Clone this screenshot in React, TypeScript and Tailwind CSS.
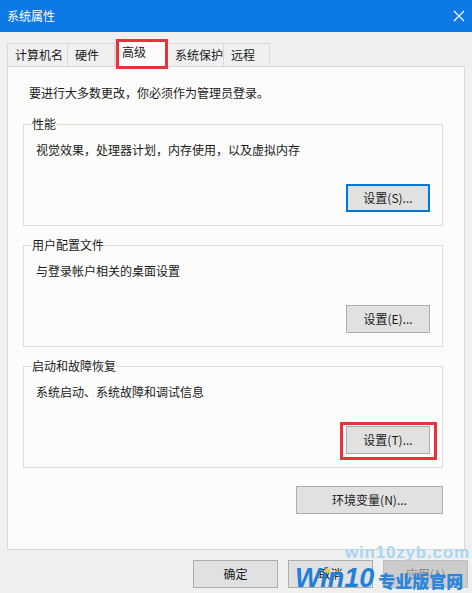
import React from "react";

const font = { fontFamily: '"Noto Sans CJK SC", "Microsoft YaHei", sans-serif' };

function Btn({ label, focus, disabled, w = "w-[84px]" }: { label: string; focus?: boolean; disabled?: boolean; w?: string }) {
  const base = "h-[28px] flex items-center justify-center text-[12px] leading-[16px] " + w;
  if (focus)
    return <div className={base + " bg-[#e1e1e1] border-2 border-[#0078d7] text-[#1a1a1a]"}>{label}</div>;
  if (disabled)
    return <div className={base + " bg-[#cccccc] border border-[#bfbfbf] text-[#8a8a8a]"}>{label}</div>;
  return <div className={base + " bg-[#e1e1e1] border border-[#adadad] text-[#1a1a1a]"}>{label}</div>;
}

function Group({ title, desc, button, focus, marked }: { title: string; desc: string; button: string; focus?: boolean; marked?: boolean }) {
  return (
    <div className="relative border border-[#dcdcdc] h-[102px] pt-[17px] pl-[12px] pr-[12px]">
      <div className="absolute -top-[9px] left-[7px] bg-[#fcfcfa] px-[1px] text-[12px] leading-[16px] text-[#1a1a1a]">{title}</div>
      <div className="text-[12px] leading-[16px] text-[#1a1a1a]">{desc}</div>
      <div className="flex justify-end mt-[26px]">
        <div className="relative">
          <Btn label={button} focus={focus} />
          {marked && <div className="absolute -left-[6px] -top-[4px] w-[97px] h-[38px] border-[3px] border-[#e8333c]" />}
        </div>
      </div>
    </div>
  );
}

function TitleBar() {
  return (
    <div className="flex h-[32px] shrink-0 items-center justify-between bg-[#0c79e6] pl-[7px] pr-[6px] text-white">
      <span className="text-[12px] leading-[16px] text-white">系统属性</span>
      <svg width="12" height="12" viewBox="0 0 12 12" className="mr-[1px]">
        <path d="M1 1 L11 11 M11 1 L1 11" stroke="#ffffff" strokeWidth="1.2" />
      </svg>
    </div>
  );
}

export default function App() {
  const tabs = [
    { t: "计算机名", w: "w-[61px]" },
    { t: "硬件", w: "w-[47px]" },
    { t: "高级", w: "w-[53px]", sel: true },
    { t: "系统保护", w: "w-[56px]" },
    { t: "远程", w: "w-[46px]" },
  ];
  return (
    <div className="relative flex flex-col w-[472px] h-[593px] bg-[#f0f0f0] overflow-hidden" style={font}>
      <TitleBar />

      {/* tabs */}
      <div className="flex items-end pl-[7px] pt-[6px] h-[34px]">
        {tabs.map((x) =>
          x.sel ? (
            <div key={x.t} className={"relative h-[28px] bg-[#fcfcfa] border-t border-x border-[#d9d9d9] pl-[6px] pt-[4px] text-[12px] leading-[16px] text-[#1a1a1a] z-10 -mb-[1px] " + x.w}>
              {x.t}
              <div className="absolute -left-[0px] -top-[1px] w-[52px] h-[30px] border-[3px] border-[#e8333c]" />
            </div>
          ) : (
            <div key={x.t} className={"h-[23px] border-t border-r border-[#d9d9d9] first:border-l flex items-center pl-[7px] text-[12px] leading-[16px] text-[#1a1a1a] " + x.w}>
              {x.t}
            </div>
          )
        )}
      </div>

      {/* panel */}
      <div className="mx-[7px] h-[484px] bg-[#fcfcfa] border border-[#d9d9d9] pt-[18px] pl-[15px] pr-[21px]">
        <div className="pl-[6px] text-[12px] leading-[16px] text-[#1a1a1a]">要进行大多数更改，你必须作为管理员登录。</div>
        <div className="mt-[23px] flex flex-col gap-[19px]">
          <Group title="性能" desc="视觉效果，处理器计划，内存使用，以及虚拟内存" button="设置(S)..." focus />
          <Group title="用户配置文件" desc="与登录帐户相关的桌面设置" button="设置(E)..." />
          <Group title="启动和故障恢复" desc="系统启动、系统故障和调试信息" button="设置(T)..." marked />
        </div>
        <div className="flex justify-end mt-[18px]">
          <Btn label="环境变量(N)..." w="w-[147px]" />
        </div>
      </div>

      {/* bottom buttons */}
      <div className="flex justify-end gap-[10px] pr-[4px] mt-[10px]">
        <Btn label="确定" w="w-[85px]" />
        <Btn label="取消" w="w-[85px]" />
        <Btn label="应用(A)" w="w-[85px]" disabled />
      </div>

      {/* watermark */}
      <div className="absolute left-[345px] top-[543px] text-[17px] leading-[20px] font-black tracking-[0.8px] text-[#a9d6f2] whitespace-nowrap font-['Liberation_Sans',Arial,sans-serif]">
        win10zyb.com
      </div>
      <div className="absolute left-[295px] top-[565px] flex items-end whitespace-nowrap">
        <span className="text-[27px] leading-[27px] font-bold italic text-[#1f7fd8] font-['Liberation_Sans',Arial,sans-serif]">
          Win10
        </span>
        <span className="ml-[4px] text-[17px] leading-[22px] font-black text-[#2a86dc]">专业版官网</span>
      </div>
      <div className="absolute left-[325px] top-[568px] w-[5px] h-[5px] rounded-full bg-[#f2c94c]" />
    </div>
  );
}
